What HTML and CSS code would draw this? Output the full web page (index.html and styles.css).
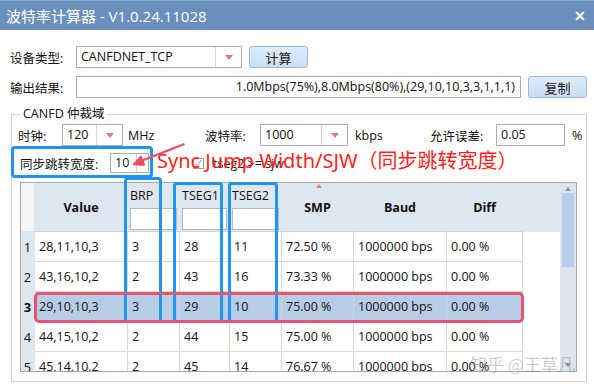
FILE: index.html
```html
<!DOCTYPE html>
<html lang="zh-CN">
<head>
  <meta charset="UTF-8" />
  <title>波特率计算器</title>
  <link rel="stylesheet" href="styles.css">
</head>
<body>
  <div class="window">
    <div class="titlebar">
      <span>波特率计算器 - V1.0.24.11028</span>
      <span class="close">✕</span>
    </div>

    <div class="main">
      <div class="form-row">
        <span class="label w66">设备类型:</span>
        <div class="combo device">
          <span class="combo-text">CANFDNET_TCP</span>
          <span class="combo-btn"><i class="tri"></i></span>
        </div>
        <button class="btn">计算</button>
      </div>

      <div class="form-row row-output">
        <span class="label w66">输出结果:</span>
        <div class="textbox output">1.0Mbps(75%),8.0Mbps(80%),(29,10,10,3,3,1,1,1)</div>
        <button class="btn">复制</button>
      </div>

      <div class="group">
        <div class="group-title">CANFD 仲裁域</div>

        <div class="form-row row-clock">
          <span class="label w44">时钟:</span>
          <div class="combo clock">
            <span class="combo-text">120</span>
            <span class="combo-btn"><i class="tri"></i></span>
          </div>
          <span class="unit mhz">MHz</span>
          <span class="label w55">波特率:</span>
          <div class="combo baud">
            <span class="combo-text">1000</span>
            <span class="combo-btn"><i class="tri"></i></span>
          </div>
          <span class="unit kbps">kbps</span>
          <span class="label w66">允许误差:</span>
          <div class="textbox err">0.05</div>
          <span class="unit pct">%</span>
        </div>

        <div class="form-row row-sjw">
          <span class="label w90">同步跳转宽度:</span>
          <div class="spin">
            <span class="spin-text">10</span>
            <span class="spin-btn"></span>
          </div>
          <span class="check">✓</span>
          <span class="check-label">tseg2 &gt;= sjw</span>
        </div>

        <div class="grid">
          <div class="grid-body">
            <div class="cell corner"></div>
            <div class="cell head bold">Value</div>
            <div class="cell head filter"><span>BRP</span><span class="filter-box"></span></div>
            <div class="cell head filter"><span>TSEG1</span><span class="filter-box"></span></div>
            <div class="cell head filter"><span>TSEG2</span><span class="filter-box"></span></div>
            <div class="cell head bold sort">SMP</div>
            <div class="cell head bold">Baud</div>
            <div class="cell head bold">Diff</div>
            <div class="cell head fill"></div>

            <div class="cell rowhead">1</div>
            <div class="cell">28,11,10,3</div>
            <div class="cell">3</div>
            <div class="cell">28</div>
            <div class="cell">11</div>
            <div class="cell">72.50 %</div>
            <div class="cell">1000000 bps</div>
            <div class="cell">0.00 %</div>
            <div class="cell fill"></div>

            <div class="cell rowhead">2</div>
            <div class="cell">43,16,10,2</div>
            <div class="cell">2</div>
            <div class="cell">43</div>
            <div class="cell">16</div>
            <div class="cell">73.33 %</div>
            <div class="cell">1000000 bps</div>
            <div class="cell">0.00 %</div>
            <div class="cell fill"></div>

            <div class="cell rowhead bold">3</div>
            <div class="cell sel">29,10,10,3</div>
            <div class="cell sel">3</div>
            <div class="cell sel">29</div>
            <div class="cell sel">10</div>
            <div class="cell sel">75.00 %</div>
            <div class="cell sel">1000000 bps</div>
            <div class="cell sel">0.00 %</div>
            <div class="cell fill"></div>

            <div class="cell rowhead">4</div>
            <div class="cell">44,15,10,2</div>
            <div class="cell">2</div>
            <div class="cell">44</div>
            <div class="cell">15</div>
            <div class="cell">75.00 %</div>
            <div class="cell">1000000 bps</div>
            <div class="cell">0.00 %</div>
            <div class="cell fill"></div>

            <div class="cell rowhead">5</div>
            <div class="cell">45,14,10,2</div>
            <div class="cell">2</div>
            <div class="cell">45</div>
            <div class="cell">14</div>
            <div class="cell">76.67 %</div>
            <div class="cell">1000000 bps</div>
            <div class="cell">0.00 %</div>
            <div class="cell fill"></div>
          </div>
          <div class="scrollbar">
            <span class="arrow up"></span>
            <span class="thumb"></span>
            <span class="arrow down"></span>
          </div>
        </div>
      </div>
    </div>

    <!-- 标注 -->
    <div class="mark blue mark-sjw"></div>
    <div class="mark blue mark-brp"></div>
    <div class="mark blue mark-tseg1"></div>
    <div class="mark blue mark-tseg2"></div>
    <div class="mark red mark-row"></div>
    <svg class="arrow-note" width="56" height="30" viewBox="0 0 56 30">
      <polygon points="54,2 55,4 14,20 15,25 2,24 11,14 13,18" fill="#e8506a" />
    </svg>
    <div class="note">Sync Jump Width/SJW（同步跳转宽度）</div>
    <div class="watermark">知乎 @王草凡</div>
  </div>
</body>
</html>
```

FILE: styles.css
```css
* {
  box-sizing: border-box;
}

body {
  margin: 0;
  font-family: "Open Sans", "Noto Sans CJK SC", sans-serif;
  font-size: 12.5px;
  color: #111;
}

.window {
  position: relative;
  width: 594px;
  height: 384px;
  overflow: hidden;
  background-color: white;
}

.titlebar {
  height: 30px;
  background-color: #6b8fbc;
  border-top: 1px solid #8eaad0;
  color: white;
  font-size: 15px;
  display: flex;
  align-items: center;
  justify-content: space-between;
  padding: 0 8px 0 6px;
}

.close {
  font-size: 14px;
  font-weight: bold;
}

.main {
  padding: 16px 7px 0 10px;
}

.form-row {
  display: flex;
  align-items: center;
  height: 22px;
}

.label {
  white-space: nowrap;
}

.w44 { width: 44px; }
.w55 { width: 55px; }
.w66 { width: 66px; }
.w90 { width: 90px; }

.combo {
  display: flex;
  height: 22px;
  border: 1px solid #abadb3;
  background-color: white;
}

.combo-text {
  flex: 1;
  padding-left: 4px;
  line-height: 20px;
}

.combo-btn {
  width: 26px;
  border-left: 1px solid #d4d4d4;
  display: flex;
  align-items: center;
  justify-content: center;
}

.tri {
  width: 0;
  height: 0;
  border-left: 4px solid transparent;
  border-right: 4px solid transparent;
  border-top: 5px solid #e07a7a;
}

.device { width: 166px; }
.clock { width: 61px; }
.baud { width: 88px; }

.btn {
  height: 22px;
  width: 59px;
  margin-left: 7px;
  border: 1px solid #9db6d3;
  border-radius: 3px;
  background: linear-gradient(#deecfb, #c9def5);
  font-family: inherit;
  font-size: 13px;
  color: #222;
  padding: 0;
}

.row-output {
  margin-top: 8px;
}

.textbox {
  height: 22px;
  border: 1px solid #abadb3;
  line-height: 20px;
  padding: 0 5px;
  white-space: nowrap;
}

.output {
  width: 445px;
  text-align: right;
}

.err {
  width: 69px;
  padding-left: 4px;
}

.group {
  margin: 16px 0 0 1px;
  border: 1px solid #cfcfcf;
  padding: 0 0 7px 6px;
  height: 268px;
}

.group-title {
  margin: -10px 0 0 2px;
  padding: 0 3px;
  width: fit-content;
  background-color: white;
  line-height: 18px;
}

.row-clock {
  margin-top: 1px;
}

.unit {
  white-space: nowrap;
}

.mhz { margin-left: 5px; width: 77px; }
.kbps { margin-left: 7px; width: 75px; }
.pct { margin-left: 7px; }

.row-sjw {
  margin-top: 7px;
  height: 20px;
  padding-left: 2px;
}

.spin {
  display: flex;
  width: 39px;
  height: 20px;
  border: 1px solid #abadb3;
}

.spin-text {
  flex: 1;
  padding-left: 4px;
  line-height: 18px;
}

.spin-btn {
  width: 12px;
  border-left: 1px solid #d4d4d4;
}

.check {
  margin-left: 44px;
  width: 11px;
  height: 11px;
  border: 1px solid #9a9a9a;
  font-size: 9px;
  line-height: 9px;
  text-align: center;
  color: #c06070;
}

.check-label {
  margin-left: 9px;
}

/* 表格 */
.grid {
  display: flex;
  margin: 9px 0 0 2px;
  width: 557px;
  height: 190px;
  border: 1px solid #a9a9a9;
  overflow: hidden;
}

.grid-body {
  display: grid;
  grid-template-columns: 14px 93px 52px 50px 52px 72px 93px 76px 37px;
  grid-template-rows: 49px repeat(5, 30px);
  width: 539px;
}

.cell {
  border-right: 1px solid #d9d9d9;
  border-bottom: 1px solid #d9d9d9;
  padding-left: 4px;
  display: flex;
  align-items: center;
  white-space: nowrap;
  background-color: white;
}

.corner {
  background-color: #f4f7fa;
  border-color: #e0e6ec;
}

.head {
  background-color: #dee6ef;
  border-right-color: #dee6ef;
  border-bottom-color: #cdd5de;
  justify-content: center;
  padding-left: 0;
  position: relative;
}

.bold {
  font-weight: bold;
}

.head.filter {
  flex-direction: column;
  align-items: flex-start;
  justify-content: flex-start;
  padding: 4px 2px 0;
}

.filter-box {
  margin-top: 4px;
  width: 100%;
  height: 22px;
  border: 1px solid #b8b8b8;
  background-color: white;
}

.sort::before {
  content: "";
  position: absolute;
  top: 1px;
  left: 34px;
  border-left: 3px solid transparent;
  border-right: 3px solid transparent;
  border-bottom: 4px solid #e08080;
}

.head.fill {
  border-right: none;
}

.cell.fill {
  border: none;
}

.rowhead {
  background-color: #dee6ef;
  border-right-color: #dee6ef;
  border-bottom-color: #dee6ef;
  justify-content: center;
  padding-left: 0;
  font-size: 13px;
}

.sel {
  background-color: #b8cce6;
  border-right-color: #c8d6ea;
}

.scrollbar {
  width: 16px;
  background-color: #dfe5ec;
  display: flex;
  flex-direction: column;
  align-items: center;
  padding: 4px 0;
}

.arrow {
  width: 0;
  height: 0;
  border-left: 3px solid transparent;
  border-right: 3px solid transparent;
}

.arrow.up {
  border-bottom: 4px solid #8d939a;
}

.arrow.down {
  margin-top: auto;
  border-top: 4px solid #8d939a;
}

.thumb {
  margin-top: 2px;
  width: 12px;
  height: 74px;
  background-color: #b8cdec;
}

/* 标注 */
.mark {
  position: absolute;
  border: 3px solid;
  border-radius: 4px;
}

.blue {
  border-color: #1f94f2;
}

.red {
  border-color: #e3566e;
  border-radius: 5px;
}

.mark-sjw { left: 11px; top: 146px; width: 142px; height: 32px; }
.mark-brp { left: 124px; top: 177px; width: 38px; height: 146px; }
.mark-tseg1 { left: 173px; top: 182px; width: 50px; height: 141px; }
.mark-tseg2 { left: 228px; top: 182px; width: 50px; height: 141px; }
.mark-row { left: 34px; top: 292px; width: 490px; height: 31px; }

.arrow-note {
  position: absolute;
  left: 130px;
  top: 141px;
}

.note {
  position: absolute;
  left: 157px;
  top: 147px;
  font-family: "Noto Sans", "Noto Sans CJK SC", sans-serif;
  font-size: 20px;
  line-height: 27px;
  color: #ff1e1e;
  white-space: nowrap;
}

.watermark {
  position: absolute;
  left: 470px;
  top: 351px;
  font-family: "Noto Sans CJK SC", sans-serif;
  font-size: 17px;
  color: rgba(140, 140, 140, 0.45);
  white-space: nowrap;
}
```
